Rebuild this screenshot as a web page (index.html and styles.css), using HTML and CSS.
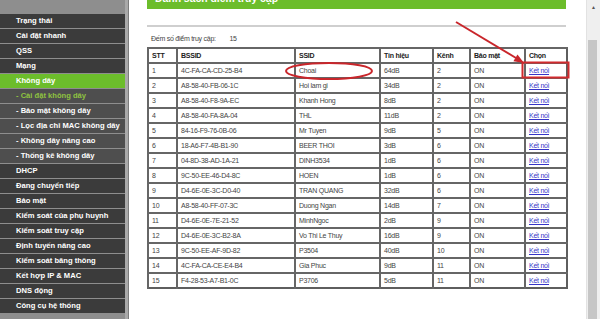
FILE: index.html
```html
<!DOCTYPE html>
<html lang="vi">
<head>
<meta charset="utf-8">
<title>Danh sách điểm truy cập</title>
<link rel="stylesheet" href="styles.css">
</head>
<body>
<div class="page">
  <nav class="sidebar">
    <div class="item">Trạng thái</div>
    <div class="item">Cài đặt nhanh</div>
    <div class="item">QSS</div>
    <div class="item">Mạng</div>
    <div class="item active">Không dây</div>
    <div class="item sub current">- Cài đặt không dây</div>
    <div class="item sub">- Bảo mật không dây</div>
    <div class="item sub">- Lọc địa chỉ MAC không dây</div>
    <div class="item sub">- Không dây nâng cao</div>
    <div class="item sub">- Thống kê không dây</div>
    <div class="item">DHCP</div>
    <div class="item">Đang chuyển tiếp</div>
    <div class="item">Bảo mật</div>
    <div class="item">Kiểm soát của phụ huynh</div>
    <div class="item">Kiểm soát truy cập</div>
    <div class="item">Định tuyến nâng cao</div>
    <div class="item">Kiểm soát băng thông</div>
    <div class="item">Kết hợp IP &amp; MAC</div>
    <div class="item">DNS động</div>
    <div class="item">Công cụ hệ thống</div>
  </nav>
  <main class="main">
    <div class="panel">
      <div class="title">Danh sách điểm truy cập</div>
      <div class="rule"></div>
      <div class="count">Đếm số điểm truy cập: <span class="num">15</span></div>
      <table class="aps">
        <colgroup>
          <col class="c1"><col class="c2"><col class="c3"><col class="c4"><col class="c5"><col class="c6"><col class="c7">
        </colgroup>
        <thead>
          <tr><th>STT</th><th>BSSID</th><th>SSID</th><th>Tín hiệu</th><th>Kênh</th><th>Bảo mật</th><th>Chọn</th></tr>
        </thead>
        <tbody>
          <tr><td>1</td><td>4C-FA-CA-CD-25-B4</td><td>Choai</td><td>64dB</td><td>2</td><td>ON</td><td><a href="#">Kết nối</a></td></tr>
          <tr><td>2</td><td>A8-58-40-FB-06-1C</td><td>Hoi lam gi</td><td>34dB</td><td>2</td><td>ON</td><td><a href="#">Kết nối</a></td></tr>
          <tr><td>3</td><td>A8-58-40-F8-9A-EC</td><td>Khanh Hong</td><td>8dB</td><td>2</td><td>ON</td><td><a href="#">Kết nối</a></td></tr>
          <tr><td>4</td><td>A8-58-40-FA-8A-04</td><td>THL</td><td>11dB</td><td>2</td><td>ON</td><td><a href="#">Kết nối</a></td></tr>
          <tr><td>5</td><td>84-16-F9-76-0B-06</td><td>Mr Tuyen</td><td>9dB</td><td>5</td><td>ON</td><td><a href="#">Kết nối</a></td></tr>
          <tr><td>6</td><td>18-A6-F7-4B-B1-90</td><td>BEER THOI</td><td>3dB</td><td>6</td><td>ON</td><td><a href="#">Kết nối</a></td></tr>
          <tr><td>7</td><td>04-8D-38-AD-1A-21</td><td>DINH3534</td><td>1dB</td><td>6</td><td>ON</td><td><a href="#">Kết nối</a></td></tr>
          <tr><td>8</td><td>9C-50-EE-46-D4-8C</td><td>HOEN</td><td>1dB</td><td>6</td><td>ON</td><td><a href="#">Kết nối</a></td></tr>
          <tr><td>9</td><td>D4-6E-0E-3C-D0-40</td><td>TRAN QUANG</td><td>32dB</td><td>6</td><td>ON</td><td><a href="#">Kết nối</a></td></tr>
          <tr><td>10</td><td>A8-58-40-FF-07-3C</td><td>Duong Ngan</td><td>14dB</td><td>7</td><td>ON</td><td><a href="#">Kết nối</a></td></tr>
          <tr><td>11</td><td>D4-6E-0E-7E-21-52</td><td>MinhNgoc</td><td>2dB</td><td>9</td><td>ON</td><td><a href="#">Kết nối</a></td></tr>
          <tr><td>12</td><td>D4-6E-0E-3C-B2-8A</td><td>Vo Thi Le Thuy</td><td>16dB</td><td>9</td><td>ON</td><td><a href="#">Kết nối</a></td></tr>
          <tr><td>13</td><td>9C-50-EE-AF-9D-82</td><td>P3504</td><td>40dB</td><td>10</td><td>ON</td><td><a href="#">Kết nối</a></td></tr>
          <tr><td>14</td><td>4C-FA-CA-CE-E4-B4</td><td>Gia Phuc</td><td>9dB</td><td>11</td><td>ON</td><td><a href="#">Kết nối</a></td></tr>
          <tr><td>15</td><td>F4-28-53-A7-B1-0C</td><td>P3706</td><td>5dB</td><td>11</td><td>ON</td><td><a href="#">Kết nối</a></td></tr>
        </tbody>
      </table>
    </div>
  </main>
  <div class="scrollbar">
    <div class="arrow">▲</div>
    <div class="thumb"></div>
  </div>
  <svg class="marks" width="600" height="319" viewBox="0 0 600 319" aria-hidden="true">
    <ellipse cx="329" cy="71" rx="43" ry="8" fill="none" stroke="#c9262b" stroke-width="2"/>
    <rect x="522.5" y="62.5" width="46" height="15" fill="none" stroke="#d12a2e" stroke-width="2"/>
    <line x1="456" y1="22" x2="516" y2="58" stroke="#c9262b" stroke-width="2"/>
    <polygon points="524,63 513.4,61.3 517.5,54.5" fill="#c9262b"/>
  </svg>
</div>
</body>
</html>
```
FILE: styles.css
```css
html, body {
  margin: 0;
  padding: 0;
  background: #fff;
}

.page {
  position: relative;
  display: flex;
  width: 600px;
  height: 319px;
  overflow: hidden;
  font-family: "Liberation Sans", Arial, sans-serif;
}

.sidebar {
  width: 125px;
  flex: none;
  padding-top: 14px;
  background: #8e8e8e;
  border-right: 3px solid #a9a9a9;
  box-shadow: 1px 0 0 #7c7c7c;
  margin-right: 2px;
}

.item {
  height: 14px;
  margin-bottom: 1px;
  padding-left: 16px;
  background: #3b3b3b;
  color: #fff;
  font-weight: bold;
  font-size: 7.6px;
  line-height: 14px;
  white-space: nowrap;
  overflow: hidden;
}

.item.sub {
  background: #4e4e4e;
}

.item.active {
  background: #6cbd2b;
}

.item.current {
  color: #8fc340;
}

.main {
  flex: 1;
  background: #fff;
  padding-left: 17px;
}

.panel {
  width: 419px;
}

.title {
  height: 24px;
  margin-top: -15px;
  box-sizing: border-box;
  padding: 7px 0 0 8px;
  background: #6cbd2b;
  color: #fff;
  font-weight: bold;
  font-size: 10.4px;
  line-height: 14px;
}

.rule {
  height: 2px;
  margin-top: 16px;
  background: #cfcfcf;
}

.count {
  margin-top: 6px;
  padding-left: 4px;
  height: 12px;
  font-size: 7px;
  letter-spacing: -0.25px;
  line-height: 12px;
  color: #444;
}

.count .num {
  margin-left: 12px;
}

.aps {
  margin-top: 2px;
  width: 419px;
  border-collapse: collapse;
  table-layout: fixed;
  border: 2px solid #5e5e5e;
  font-size: 7px;
  letter-spacing: -0.25px;
  color: #444;
}

.c1 { width: 29px; }
.c2 { width: 118px; }
.c3 { width: 85px; }
.c4 { width: 53px; }
.c5 { width: 37px; }
.c6 { width: 55px; }
.c7 { width: 42px; }

.aps th,
.aps td {
  height: 13px;
  padding: 0 0 0 3px;
  border: 1px solid #666;
  border-width: 2px 1px 0 2px;
  text-align: left;
  line-height: 12px;
  white-space: nowrap;
  overflow: hidden;
}

.aps th {
  font-weight: bold;
  color: #222;
}

.aps a {
  color: #3535c8;
  text-decoration: underline;
}

.scrollbar {
  width: 13px;
  flex: none;
  display: flex;
  flex-direction: column;
  background: #efefef;
  border-left: 1px solid #e2e2e2;
}

.arrow {
  height: 14px;
  font-size: 5px;
  line-height: 14px;
  text-align: center;
  color: #555;
}

.thumb {
  margin: 26px 3px 0 1px;
  flex: 1;
  background: #c6c6c6;
}

.marks {
  position: absolute;
  left: 0;
  top: 0;
  pointer-events: none;
}
```
